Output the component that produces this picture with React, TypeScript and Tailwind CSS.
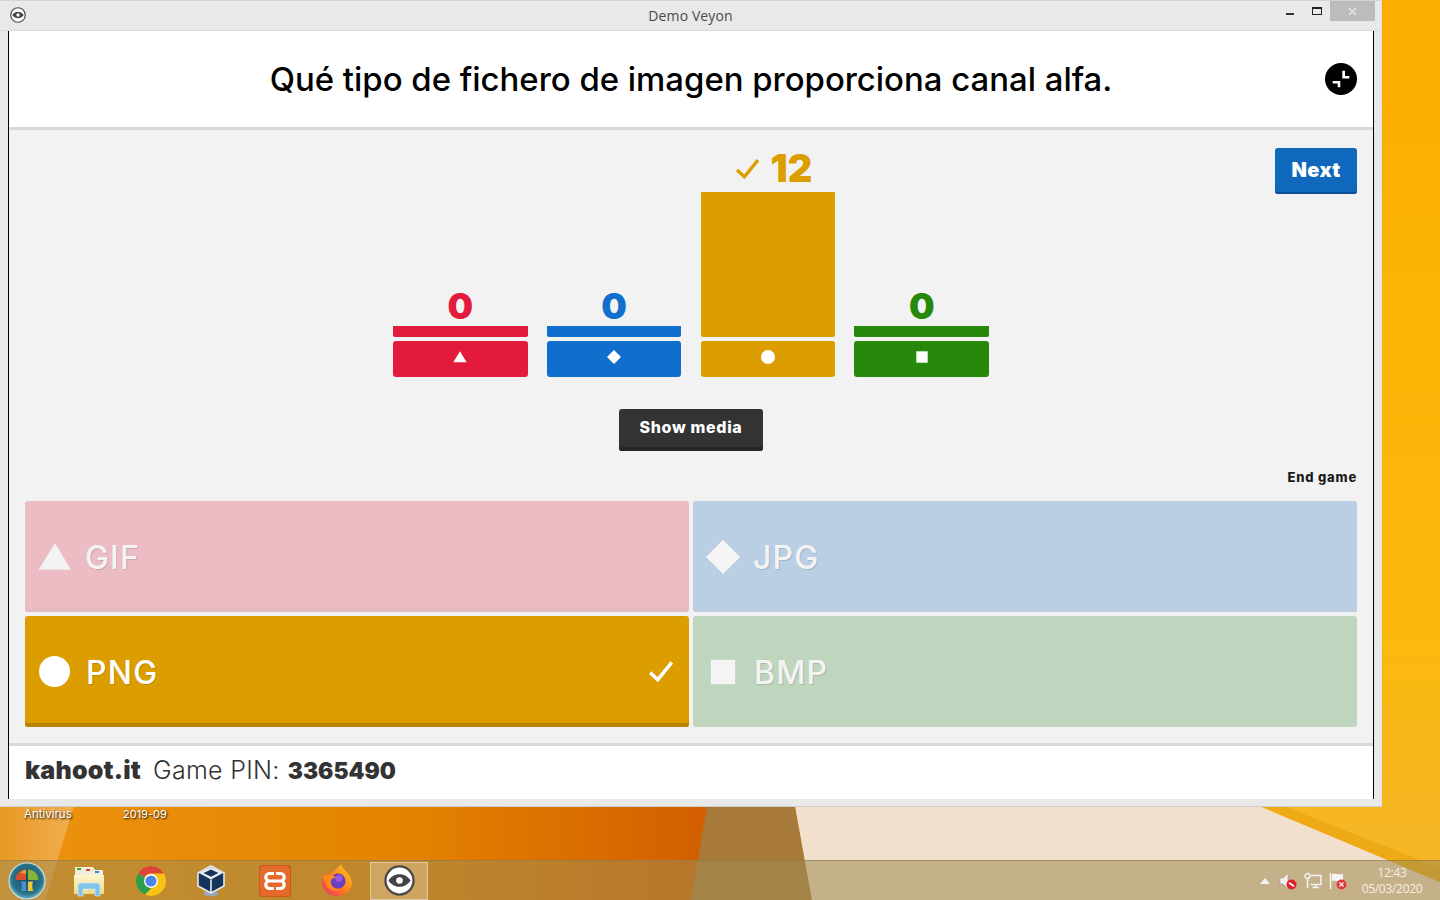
import React from "react";

const VeyonIcon = ({ size }: { size: number }) => (
  <svg width={size} height={size} viewBox="0 0 32 32">
    <circle cx="16" cy="16" r="14.5" fill="#fff" stroke="#4a4a4a" strokeWidth="2.4" />
    <path d="M4.5 16C8 11 12 9.5 16 9.5S24 11 27.5 16C24 21 20 22.5 16 22.5S8 21 4.5 16Z" fill="#444" />
    <circle cx="16" cy="16" r="3.4" fill="#fff" />
  </svg>
);

const Shape = ({ kind, size, fill }: { kind: string; size: number; fill: string }) => (
  <svg width={size} height={size} viewBox="0 0 32 32" className="shrink-0">
    {kind === "triangle" && <polygon points="0.5,28 16,3 31,28" fill={fill} />}
    {kind === "diamond" && <polygon points="16,0 32,16 16,32 0,16" fill={fill} />}
    {kind === "circle" && <circle cx="16" cy="16" r="16" fill={fill} />}
    {kind === "square" && <rect x="3" y="3" width="26" height="26" fill={fill} />}
  </svg>
);

const Check = ({ color, width, className }: { color: string; width: number; className?: string }) => (
  <svg width={width} height={width} viewBox="0 0 24 24" className={className}>
    <path d="M2 13.5 9 20 22 4" fill="none" stroke={color} strokeWidth="3.2" />
  </svg>
);

const bars = [
  { value: "0", kind: "triangle", text: "text-[#e21b3c]", bg: "bg-[#e21b3c]", height: "h-[11px]", done: false },
  { value: "0", kind: "diamond", text: "text-[#106ecc]", bg: "bg-[#106ecc]", height: "h-[11px]", done: false },
  { value: "12", kind: "circle", text: "text-[#db9d00]", bg: "bg-[#db9d00]", height: "h-[145px]", done: true },
  { value: "0", kind: "square", text: "text-[#26890c]", bg: "bg-[#26890c]", height: "h-[11px]", done: false },
];

const answers = [
  { label: "GIF", kind: "triangle", tile: "bg-[#ecbcc4] shadow-[inset_0_-4px_0_#e4bcbf]", text: "text-[#f3f3f3]", fill: "#f3f3f3", shape: 34, gap: "gap-[13px]", pad: "pl-[13px]" },
  { label: "JPG", kind: "diamond", tile: "bg-[#bacfe4] shadow-[inset_0_-4px_0_#bccde0]", text: "text-[#f3f3f3]", fill: "#f5f5f5", shape: 34, gap: "gap-[13px]", pad: "pl-[13px]" },
  { label: "PNG", kind: "circle", tile: "bg-[#db9d00] shadow-[inset_0_-4px_0_#b88400]", text: "text-white", fill: "#ffffff", shape: 31, gap: "gap-[16px]", pad: "pl-[14px]", correct: true },
  { label: "BMP", kind: "square", tile: "bg-[#bfd5be]", text: "text-[#f3f3f3]", fill: "#f5f5f5", shape: 30, gap: "gap-[16px]", pad: "pl-[15px]" },
];

const Wallpaper = () => (
  <svg className="absolute inset-0" width="1440" height="900" viewBox="0 0 1440 900">
    <defs>
      <linearGradient id="left" x1="0" x2="1" y1="0" y2="0">
        <stop offset="0" stopColor="#ec9310" />
        <stop offset="0.55" stopColor="#e48400" />
        <stop offset="1" stopColor="#d25e00" />
      </linearGradient>
      <linearGradient id="right" x1="0" x2="0" y1="0" y2="1">
        <stop offset="0" stopColor="#faae00" />
        <stop offset="0.7" stopColor="#fcb90c" />
        <stop offset="1" stopColor="#f3b52c" />
      </linearGradient>
      <linearGradient id="glow" x1="0" x2="1" y1="0" y2="0">
        <stop offset="0" stopColor="#e99a24" />
        <stop offset="1" stopColor="#f0ae52" />
      </linearGradient>
    </defs>
    <rect width="1440" height="900" fill="url(#right)" />
    <rect x="0" y="800" width="712" height="100" fill="url(#left)" />
    <polygon points="0,800 76,800 45,900 0,900" fill="url(#glow)" />
    <polygon points="708,800 794,800 812,900 691,900" fill="#a87a3a" />
    <polygon points="794,800 1245,800 1440,882 1440,900 812,900" fill="#f2e0cf" />
    <polygon points="1245,800 1268,800 1440,868 1440,882" fill="#eeaa14" />
  </svg>
);

const StartOrb = () => (
  <svg width="38" height="38" viewBox="0 0 38 38">
    <defs>
      <radialGradient id="orb" cx="0.5" cy="0.45" r="0.55">
        <stop offset="0" stopColor="#174a60" />
        <stop offset="0.75" stopColor="#2b7388" />
        <stop offset="1" stopColor="#6db4c2" />
      </radialGradient>
    </defs>
    <circle cx="19" cy="19" r="18" fill="url(#orb)" stroke="#c4dfe2" strokeWidth="1.2" />
    <path d="M8 18C7 12 12 8 18 7.5V18Z" fill="#d8502c" />
    <path d="M12 11C14 9 16 8 18 7.5V12Z" fill="#e8a02c" />
    <path d="M20 7.5C26 8 31 12 30 18H20Z" fill="#86b53a" />
    <path d="M13 19.5H18V29H13C14 26 14 22 13 19.5Z" fill="#4a8fd0" />
    <path d="M20 19.5H25C24 22 24 26 25 29H20Z" fill="#f0c93a" />
  </svg>
);

const TaskIcons = [
  <svg key="folder" width="33" height="32" viewBox="0 0 33 32">
    <defs>
      <linearGradient id="folderFront" x1="0" x2="0" y1="0" y2="1">
        <stop offset="0" stopColor="#fdf6cf" />
        <stop offset="1" stopColor="#efd98a" />
      </linearGradient>
    </defs>
    <path d="M2 2H20L22 5H30V28H2Z" fill="#f3eedc" />
    <rect x="4" y="3" width="4" height="2" fill="#2fae3a" />
    <rect x="13" y="4" width="4" height="2" fill="#d2483a" />
    <rect x="22" y="6" width="4" height="2" fill="#3a8ad9" />
    <path d="M1 10H31V29H1Z" fill="url(#folderFront)" />
    <path d="M5 31V21C5 19 6 18 8 18H24C26 18 27 19 27 21V31H22V24H10V31Z" fill="#7fc3e8" stroke="#cfeaf6" strokeWidth="0.7" />
  </svg>,
  <svg key="chrome" width="30" height="30" viewBox="0 0 30 30">
    <circle cx="15" cy="15" r="15" fill="#fbc116" />
    <path d="M15 0A15 15 0 0 1 28 7.5H15A7.5 7.5 0 0 0 8.5 11.2L2 7.5A15 15 0 0 1 15 0Z" fill="#db4437" />
    <path d="M2 7.5 8.5 11.2 15 22.5 9 28.8A15 15 0 0 1 2 7.5Z" fill="#2f9e4a" />
    <circle cx="15" cy="15" r="7" fill="#fff" />
    <circle cx="15" cy="15" r="5.6" fill="#4a86e8" />
  </svg>,
  <svg key="vbox" width="28" height="32" viewBox="0 0 28 32" className="-ml-[4px]">
    <ellipse cx="14" cy="28.5" rx="7.5" ry="3" fill="#9aa6b8" />
    <polygon points="14,1 27,8 27,21 14,28 1,21 1,8" fill="#15345a" stroke="#e4e8ee" strokeWidth="1.6" />
    <polygon points="14,2 26,8 14,14.5 2,8" fill="#e9edf2" />
    <polygon points="14,4.5 21.5,8 14,11.8 6.5,8" fill="#15345a" />
    <line x1="14" y1="14.5" x2="14" y2="28" stroke="#e8edf2" strokeWidth="1.6" />
  </svg>,
  <svg key="xampp" width="32" height="32" viewBox="0 0 32 32">
    <rect width="32" height="32" rx="3" fill="#c9591f" />
    <rect x="1" y="1" width="30" height="30" rx="3" fill="#e46a2a" />
    <path
      d="M15 8.5H10.5A3.7 3.7 0 0 0 10.5 16A3.7 3.7 0 0 0 10.5 23.5H15M17 8.5H21.5A3.7 3.7 0 0 1 21.5 16A3.7 3.7 0 0 1 21.5 23.5H17M10.5 16H21.5"
      fill="none"
      stroke="#fff"
      strokeWidth="3.2"
    />
  </svg>,
  <svg key="firefox" width="32" height="33" viewBox="0 0 32 33">
    <defs>
      <linearGradient id="fox" x1="0.9" x2="0.1" y1="0.1" y2="0.9">
        <stop offset="0" stopColor="#ffc21f" />
        <stop offset="0.55" stopColor="#ff7a1a" />
        <stop offset="1" stopColor="#f03a5f" />
      </linearGradient>
    </defs>
    <path d="M20 0C20 5 30 8 31 19A15 14 0 1 1 1 17C1 13 3 10 5 8C6 10 7 11 9 11C11 7 16 6 20 0Z" fill="url(#fox)" />
    <circle cx="17" cy="17" r="7.5" fill="#6b3fc4" />
    <circle cx="18" cy="14.5" r="3.5" fill="#9d5ae0" />
    <path d="M2 13C6 10 12 10 15 14C11 13.5 9 16 10 19C10 23 14 26 19 25C13 29 5 25 4 18Z" fill="#ff8a1c" />
  </svg>,
];

export default function App() {
  return (
    <div className="relative w-[1440px] h-[900px] overflow-hidden font-['Inter',sans-serif]">
      <Wallpaper />

      {/* Desktop labels, mostly hidden by the window */}
      <span className="absolute left-[24px] top-[806px] text-[11.5px] text-white [text-shadow:1px_1px_2px_#000]">Antivirus</span>
      <span className="absolute left-[123px] top-[806px] text-[11px] text-white [text-shadow:1px_1px_2px_#000]">2019-09</span>

      {/* Veyon window */}
      <div className="absolute left-0 top-0 w-[1382px] h-[807px] flex flex-col bg-[#e9e9e9] border-t border-b border-r border-t-[#d4d4d4] border-b-[#cfcfcf] border-r-[#e4e4e4]">
        <div className="relative h-[30px] shrink-0 flex items-center justify-center border-b border-[#dadada]">
          <div className="absolute left-[10px] top-[6px]">
            <VeyonIcon size={16} />
          </div>
          <span className="font-['Open_Sans'] text-[14px] tracking-[0.1px] text-[#4a4a4a]">Demo Veyon</span>
          <div className="absolute right-[6px] top-0 flex items-start">
            <span className="w-[8px] h-[2px] bg-[#333] mt-[12px] mr-[18px]" />
            <span className="w-[10px] h-[8px] border border-t-2 border-[#222] mt-[6px] mr-[8px]" />
            <span className="w-[45px] h-[20px] bg-[#bcbcbc] flex items-center justify-center">
              <svg width="9" height="9" viewBox="0 0 9 9">
                <path d="M1 1 8 8M8 1 1 8" stroke="#e4e4e4" strokeWidth="1.5" />
              </svg>
            </span>
          </div>
        </div>

        <div className="ml-[8px] mr-[7px] flex-1 flex flex-col border-x border-black bg-white min-h-0">
          <header className="relative h-[99px] shrink-0 flex items-center justify-center border-b-[3px] border-[#d9d9d9] pt-[2px]">
            <h1 className="text-[32.9px] font-medium text-black">Qué tipo de fichero de imagen proporciona canal alfa.</h1>
            <button className="absolute right-[16px] top-[32px] w-[32px] h-[32px] rounded-full bg-black">
              <svg width="32" height="32" viewBox="0 0 32 32">
                <path d="M17.3 7.7H20V13H24.3V15.6H17.3ZM7.7 18H15.3V24.3H12.7V20.6H7.7Z" fill="#fff" />
              </svg>
            </button>
          </header>

          <main className="flex-1 bg-[#f2f2f2] px-[16px] pt-[18px] pb-[16px] flex flex-col">
            <div className="grid grid-cols-[1fr_596px_1fr] h-[229px]">
              <div />
              <div className="grid grid-cols-4 gap-x-[19.33px] items-end">
                {bars.map((bar, i) => (
                  <div key={i} className="flex flex-col items-stretch">
                    <div className={`flex items-center justify-center gap-[11px] h-[36px] font-black ${bar.text} ${bar.done ? "text-[38px] mb-[6px] pl-[11px]" : "text-[36px] mb-[2px]"} leading-none`}>
                      {bar.done && <Check color="#db9d00" width={25} />}
                      <span>{bar.value}</span>
                    </div>
                    <div className={`${bar.bg} ${bar.height} rounded-b-[2px]`} />
                    <div className={`${bar.bg} mt-[4px] h-[36px] rounded-[3px] flex items-center justify-center pb-[4px]`}>
                      <Shape kind={bar.kind} size={14} fill="#fff" />
                    </div>
                  </div>
                ))}
              </div>
              <div className="flex justify-end items-start">
                <button className="w-[82px] h-[46px] rounded-[3px] bg-[#1068bd] shadow-[inset_0_-2px_0_#0b4f94] pb-[2px] text-white text-[20px] font-black tracking-[0.4px]">Next</button>
              </div>
            </div>

            <div className="flex justify-center mt-[32px]">
              <button className="w-[144px] h-[42px] rounded-[3px] bg-[#333333] shadow-[inset_0_-4px_0_#262626] pb-[6px] text-white text-[16px] font-extrabold tracking-[0.65px]">Show media</button>
            </div>

            <div className="flex justify-end mt-[19px] mb-[15px] h-[16px] items-center">
              <span className="text-[13px] font-extrabold tracking-[0.8px] text-[#1a1a1a]">End game</span>
            </div>

            <div className="grid grid-cols-2 grid-rows-[111px_111px] gap-[4px]">
              {answers.map((a) => (
                <div key={a.label} className={`rounded-[3px] flex items-center ${a.tile} ${a.gap} ${a.pad}`}>
                  <Shape kind={a.kind} size={a.shape} fill={a.fill} />
                  <span className={`text-[32px] font-medium tracking-[1.2px] translate-y-[1px] ${a.text} [text-shadow:1px_1px_0_rgba(0,0,0,0.15)]`}>{a.label}</span>
                  {a.correct && (
                    <span className="ml-auto mr-[15px] -translate-y-[1px]">
                      <Check color="#fff" width={26} />
                    </span>
                  )}
                </div>
              ))}
            </div>
          </main>

          <footer className="h-[56px] shrink-0 bg-white border-t-[3px] border-[#d9d9d9] pl-[16px] pb-[3px] flex items-center text-[#333] text-[25px]">
            <span className="font-black tracking-[0.2px]">kahoot.it</span>
            <span className="font-light ml-[12px] tracking-[0.3px]">Game PIN:</span>
            <span className="font-black ml-[8px] text-[22.7px]">3365490</span>
          </footer>
        </div>
        <div className="h-[7px] shrink-0" />
      </div>

      {/* Taskbar */}
      <div className="absolute left-0 right-0 bottom-0 h-[40px] flex items-center border-t border-[#8d7a4a]/60 bg-[#a08a50]/55">
        <div className="w-[54px] mr-[2px] flex justify-center">
          <StartOrb />
        </div>
        <div className="flex gap-[4px] ml-[4px]">
          {TaskIcons.map((icon, i) => (
            <div key={i} className="w-[58px] h-[38px] flex items-center justify-center">
              {icon}
            </div>
          ))}
          <div className="w-[58px] h-[38px] flex items-center justify-center bg-white/25 border border-white/40">
            <VeyonIcon size={31} />
          </div>
        </div>

        <div className="ml-auto flex items-center text-[#f5efe2] mr-[9px]">
          <svg width="10" height="6" viewBox="0 0 10 6" className="mr-[9px]">
            <polygon points="5,0 10,6 0,6" fill="#f2f2f2" />
          </svg>
          <svg width="18" height="18" viewBox="0 0 18 18" className="mr-[7px]">
            <path d="M1 6H4L9 1V17L4 12H1Z" fill="#efefef" stroke="#8a8a7a" strokeWidth="0.5" />
            <circle cx="12.5" cy="12.5" r="5" fill="#e0202a" />
            <path d="M9.5 12.5H15.5" stroke="#fff" strokeWidth="1.7" transform="rotate(35 12.5 12.5)" />
          </svg>
          <svg width="18" height="18" viewBox="0 0 18 18" className="mr-[7px]">
            <path d="M6.5 3.5H17V12.5H6.5M12 12.5V15.5M8.5 15.5H15" fill="none" stroke="#f4f4f4" strokeWidth="1.5" />
            <circle cx="3.5" cy="4" r="2.5" fill="none" stroke="#f4f4f4" strokeWidth="1.4" />
            <path d="M3.5 6.5V16" stroke="#f4f4f4" strokeWidth="1.5" />
          </svg>
          <svg width="18" height="18" viewBox="0 0 18 18" className="mr-[6px]">
            <path d="M1.5 1V17" stroke="#f4f4f4" strokeWidth="1.5" />
            <path d="M3 2C6 1 10 3 14 2V9C10 10 6 8 3 9Z" fill="#f4f4f4" />
            <circle cx="12.5" cy="12.5" r="5" fill="#e03a40" />
            <path d="M10.5 10.5 14.500 14.500M14.500 10.500 10.500 14.500" stroke="#fde0e0" strokeWidth="1.4" />
          </svg>
          <div className="w-[78px] flex flex-col items-center font-['Open_Sans'] text-[12px] leading-[16px] tracking-[-0.3px]">
            <span>12:43</span>
            <span>05/03/2020</span>
          </div>
        </div>
      </div>
    </div>
  );
}
